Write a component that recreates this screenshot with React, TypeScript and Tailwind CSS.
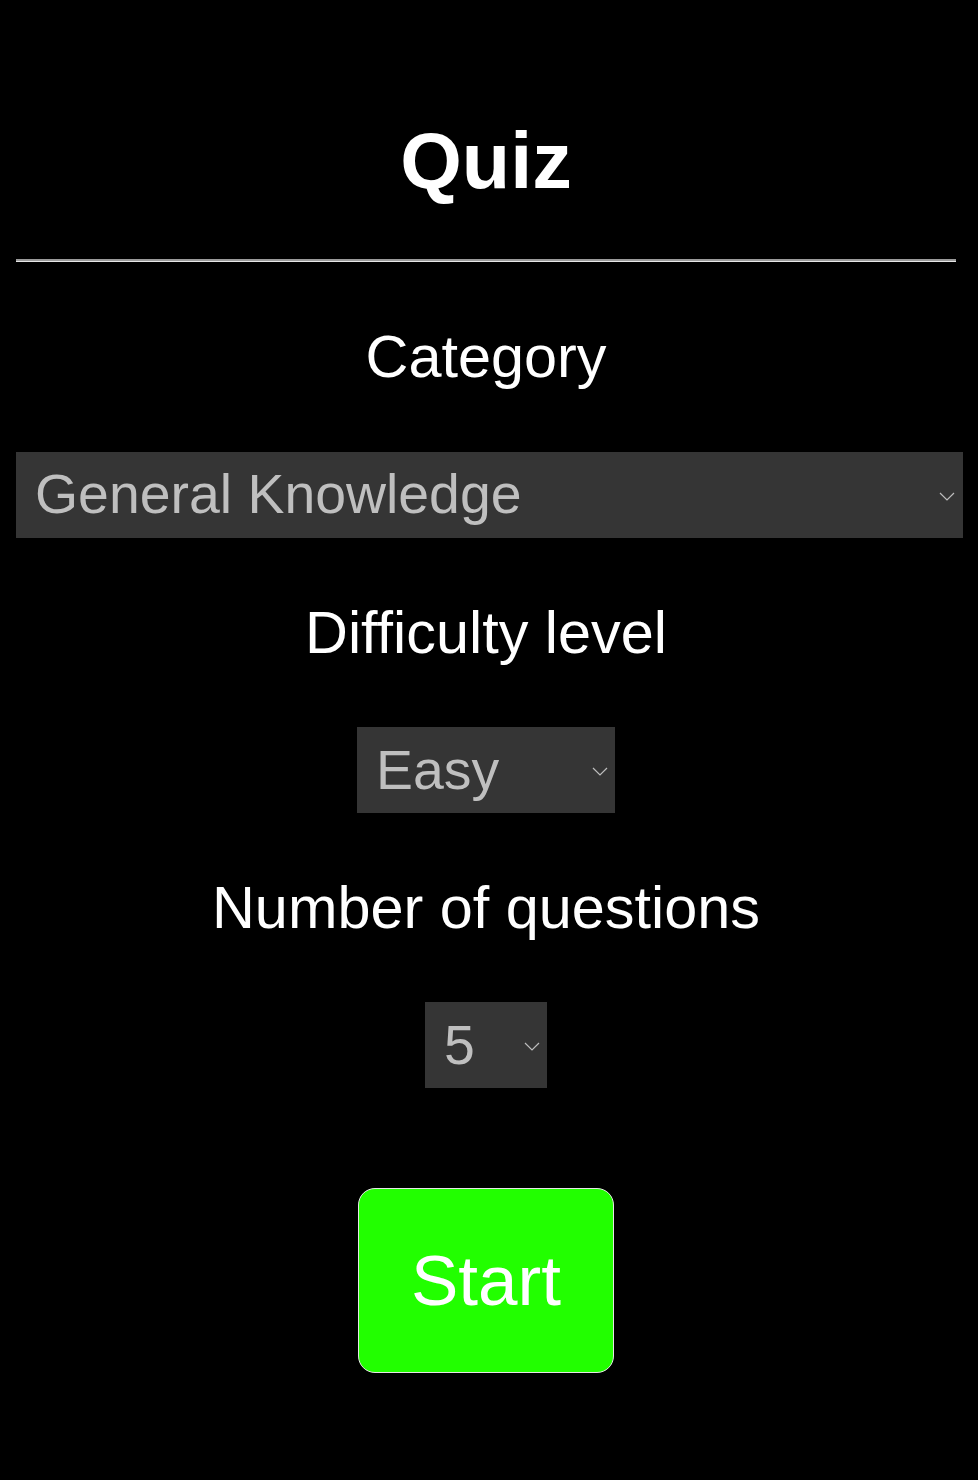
import { useState } from "react";

/**
 * Quiz setup screen: category / difficulty / question count pickers and a
 * start button. Dark page, centred column, native selects restyled flat.
 */

const CATEGORIES = ["General Knowledge", "Books", "Film", "Music", "Science"];
const LEVELS = ["Easy", "Medium", "Hard"];
const COUNTS = ["5", "10", "15", "20"];

export default function App() {
  const [category, setCategory] = useState(CATEGORIES[0]);
  const [level, setLevel] = useState(LEVELS[0]);
  const [count, setCount] = useState(COUNTS[0]);

  return (
    <main className="min-h-[1480px] bg-black font-['Liberation_Sans',Arial,sans-serif] text-white">
      <div className="ml-4 flex w-[940px] flex-col items-center pt-[121px]">
        <h1 className="text-[79.2px] font-bold leading-none">Quiz</h1>

        <hr className="mt-[59px] h-0 w-full border-0 border-t-2 border-b border-t-[#9a9a9a] border-b-[#e6e6e6]" />

        <Label text="Category" />
        <Picker
          value={category}
          options={CATEGORIES}
          onChange={setCategory}
          className="w-[947px] self-start"
          chevronRight="right-[8px]"
        />

        <Label text="Difficulty level" />
        <Picker
          value={level}
          options={LEVELS}
          onChange={setLevel}
          className="w-[258px]"
          chevronRight="right-[7px]"
        />

        <Label text="Number of questions" />
        <Picker
          value={count}
          options={COUNTS}
          onChange={setCount}
          className="w-[122px]"
          chevronRight="right-[7px]"
        />

        <button
          type="button"
          className="mt-[100px] h-[185px] w-[256px] rounded-[17px] border-[1.5px] border-[#e6e6e6] bg-[#22ff00] text-[71px] leading-none text-white"
        >
          Start
        </button>
      </div>
    </main>
  );
}

function Label({ text }: { text: string }) {
  return <h2 className="mt-[65px] text-[59.4px] leading-none">{text}</h2>;
}

function Picker({
  value,
  options,
  onChange,
  className,
  chevronRight,
}: {
  value: string;
  options: string[];
  onChange: (next: string) => void;
  className: string;
  chevronRight: string;
}) {
  return (
    <div className={`relative mt-[65px] h-[86px] ${className}`}>
      <select
        value={value}
        onChange={(e) => onChange(e.target.value)}
        className="h-full w-full appearance-none rounded-none bg-[#353535] pl-[19px] text-[55.4px] leading-[1.2] text-[#bfbfbf] outline-none"
      >
        {options.map((o) => (
          <option key={o} value={o}>
            {o}
          </option>
        ))}
      </select>
      <svg
        viewBox="0 0 16 9"
        className={`pointer-events-none absolute top-[40px] h-[9px] w-[16px] ${chevronRight}`}
        fill="none"
        stroke="#bdbdbd"
        strokeWidth="1.2"
      >
        <path d="M1 1l7 7 7-7" />
      </svg>
    </div>
  );
}
